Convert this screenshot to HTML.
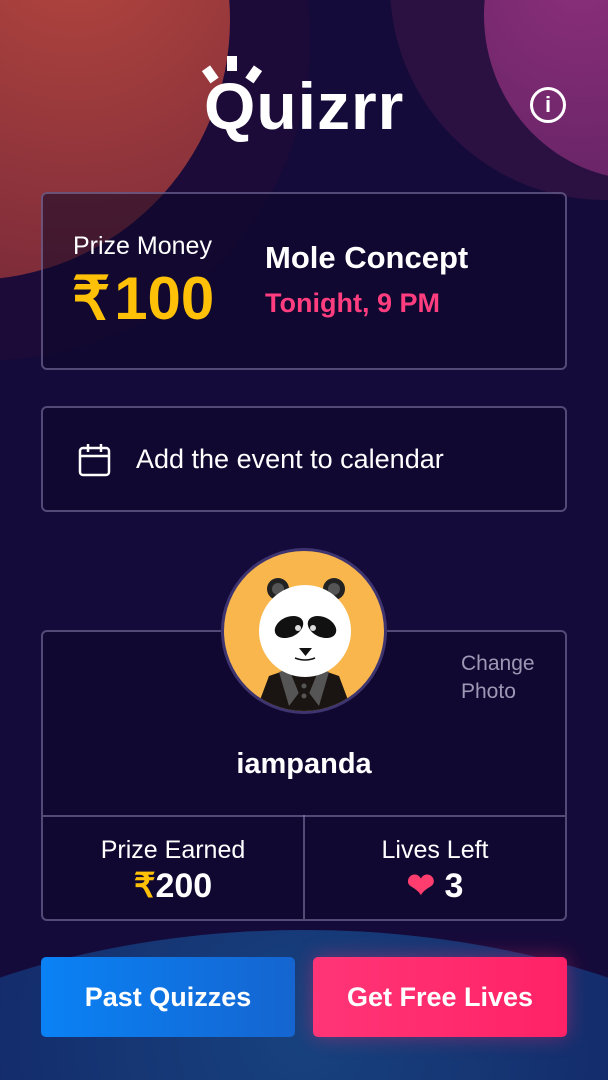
<!DOCTYPE html>
<html><head><meta charset="utf-8">
<style>
*{margin:0;padding:0;box-sizing:border-box}
html,body{width:608px;height:1080px;overflow:hidden}
body{background:#150b3a;font-family:"Liberation Sans",sans-serif;color:#fff;position:relative}
.bg{position:absolute;left:0;top:0;width:608px;height:1080px;overflow:hidden}
.c{position:absolute;border-radius:50%}
.box{position:absolute;border:2px solid rgba(140,130,180,0.55);border-radius:6px;background:rgba(12,8,40,0.55)}
.t{position:absolute;white-space:nowrap}
</style></head><body>
<div class="bg">
 <div class="c" style="left:-330px;top:-280px;width:640px;height:640px;background:#1c0b38"></div>
 <div class="c" style="left:-290px;top:-240px;width:520px;height:520px;background:radial-gradient(circle at 70% 35%,#b4463e,#7a2a3a 75%)"></div>
 <div class="c" style="left:390px;top:-230px;width:430px;height:430px;background:#2a1142"></div>
 <div class="c" style="left:484px;top:-150px;width:320px;height:330px;background:radial-gradient(circle at 30% 40%,#8a2f7a,#5a1f5e)"></div>
 <div class="c" style="left:-300px;top:930px;width:1208px;height:700px;background:radial-gradient(ellipse at 50% 15%,#17427e,#142a6a 40%,#150b3a 70%)"></div>
</div>

<!-- logo -->
<svg style="position:absolute;left:200px;top:50px" width="70" height="40">
 <rect x="5" y="17" width="10" height="15" fill="#fff" transform="rotate(-35 10 24)"/>
 <rect x="27" y="6" width="10" height="15" fill="#fff"/>
 <rect x="49" y="17" width="10" height="15" fill="#fff" transform="rotate(35 54 24)"/>
</svg>
<div class="t" style="left:204px;top:68px;font-size:66px;font-weight:bold;letter-spacing:1px">Quizrr</div>
<div style="position:absolute;left:530px;top:87px;width:36px;height:36px;border:3px solid #fff;border-radius:50%;text-align:center;font-weight:bold;font-size:22px;line-height:30px">i</div>

<div class="box" style="left:41px;top:192px;width:526px;height:178px"></div>
<div class="t" style="left:73px;top:232px;font-size:25px">Prize Money</div>
<div class="t" style="left:72px;top:264px;font-size:60px;font-weight:bold;color:#ffc107">₹<span style="margin-left:4px">100</span></div>
<div class="t" style="left:265px;top:240px;font-size:31px;font-weight:bold">Mole Concept</div>
<div class="t" style="left:265px;top:288px;font-size:27px;font-weight:bold;color:#ff3d7f">Tonight, 9 PM</div>

<div class="box" style="left:41px;top:406px;width:526px;height:106px"></div>
<svg style="position:absolute;left:77px;top:442px" width="36" height="36" fill="none" stroke="#fff" stroke-width="2.5">
 <rect x="3" y="6" width="29" height="27" rx="3"/><path d="M3 14h29M11 2v8M24 2v8"/>
</svg>
<div class="t" style="left:136px;top:444px;font-size:27px">Add the event to calendar</div>

<div class="box" style="left:41px;top:630px;width:526px;height:291px"></div>
<div style="position:absolute;left:43px;top:815px;width:522px;height:2px;background:rgba(140,130,180,0.55)"></div>
<div style="position:absolute;left:303px;top:815px;width:2px;height:104px;background:rgba(140,130,180,0.55)"></div>

<svg style="position:absolute;left:219px;top:546px" width="170" height="170" viewBox="0 0 170 170">
 <defs><clipPath id="cl"><circle cx="85" cy="85" r="80"/></clipPath></defs>
 <circle cx="85" cy="85" r="83" fill="#3e3470"/>
 <circle cx="85" cy="85" r="80" fill="#f8b64c"/>
 <g clip-path="url(#cl)">
  <path d="M35 170 L50 130 L85 118 L120 130 L135 170Z" fill="#1a1512"/>
  <path d="M60 126 L70 160 L85 140 L100 160 L110 126 L85 118Z" fill="#555"/>
  <path d="M72 128 L85 160 L98 128Z" fill="#1a1512"/>
  <circle cx="85" cy="140" r="2.5" fill="#555"/><circle cx="85" cy="150" r="2.5" fill="#555"/>
 </g>
 <circle cx="59" cy="43" r="11" fill="#222"/><circle cx="115" cy="43" r="11" fill="#222"/>
 <circle cx="59" cy="43" r="6" fill="#555"/><circle cx="115" cy="43" r="6" fill="#555"/>
 <circle cx="86" cy="85" r="46" fill="#fff"/>
 <ellipse cx="70" cy="81" rx="15" ry="10" fill="#111" transform="rotate(-25 70 81)"/>
 <ellipse cx="103" cy="81" rx="15" ry="10" fill="#111" transform="rotate(25 103 81)"/>
 <circle cx="79" cy="82" r="3" fill="#ddd"/><circle cx="94" cy="82" r="3" fill="#ddd"/>
 <path d="M80 102 L93 102 L86.5 110Z" fill="#111"/>
 <path d="M76 112 Q86 116 96 112" stroke="#111" stroke-width="1.5" fill="none"/>
</svg>

<div class="t" style="left:461px;top:650px;font-size:21px;color:#9d98b5;line-height:28px">Change<br>Photo</div>
<div class="t" style="left:0;width:608px;text-align:center;top:748px;font-size:29px;font-weight:bold">iampanda</div>

<div class="t" style="left:43px;width:260px;text-align:center;top:836px;font-size:25px">Prize Earned</div>
<div class="t" style="left:43px;width:260px;text-align:center;top:866px;font-size:34px;font-weight:bold"><span style="color:#ffc107">₹</span>200</div>
<div class="t" style="left:305px;width:260px;text-align:center;top:836px;font-size:25px">Lives Left</div>
<div class="t" style="left:305px;width:260px;text-align:center;top:866px;font-size:34px;font-weight:bold"><span style="color:#ff3d6f">❤</span> 3</div>

<div style="position:absolute;left:41px;top:957px;width:254px;height:80px;border-radius:5px;background:linear-gradient(90deg,#0a82f5,#1565d0);text-align:center;line-height:80px;font-size:27px;font-weight:bold">Past Quizzes</div>
<div style="position:absolute;left:313px;top:957px;width:254px;height:80px;border-radius:5px;background:linear-gradient(90deg,#ff3577,#ff2266);text-align:center;line-height:80px;font-size:27px;font-weight:bold;box-shadow:0 0 20px rgba(255,40,110,0.4)">Get Free Lives</div>
</body></html>
